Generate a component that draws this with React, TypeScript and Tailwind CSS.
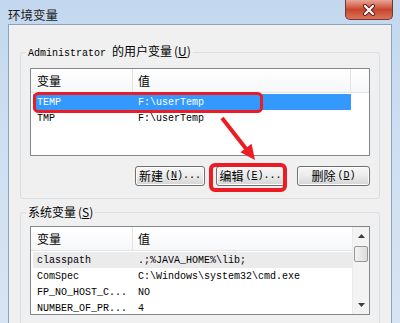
const mono = "font-['Liberation_Mono','Noto_Sans_CJK_SC',monospace]";
const cjk = "font-['Noto_Sans_CJK_SC','Liberation_Sans',sans-serif]";

function Btn({ label, k, w, dots = true }: { label: string; k: string; w: string; dots?: boolean }) {
  return (
    <button
      className={`${w} h-[20px] rounded-[3px] border border-[#707070] bg-gradient-to-b from-[#f7f7f7] via-[#ebebeb] to-[#d4d4d4] flex items-center justify-center text-black shadow-[inset_0_0_0_1px_#fcfcfc]`}
    >
      <span className={`${cjk} text-[12px] leading-none`}>{label}</span>
      <span className={`${mono} ml-[2px] text-[10px] leading-none`}>
        (<span className="underline">{k}</span>){dots ? "..." : ""}
      </span>
    </button>
  );
}

function Header() {
  return (
    <div className={`h-[24px] flex border-b border-[#e3e3e3] bg-gradient-to-b from-white to-[#f6f7f9] ${cjk} text-[12px] text-black`}>
      <div className="w-[102px] pl-[6px] flex items-center border-r border-[#e3e3e3]">变量</div>
      <div className="flex-1 pl-[5px] flex items-center">值</div>
    </div>
  );
}

function Row({ a, b, cls }: { a: string; b: string; cls?: string }) {
  return (
    <div className={`ml-[2px] h-[16px] flex items-center ${mono} text-[10px] ${cls ?? "text-black"}`}>
      <span className="w-[100px] pl-[4px] whitespace-pre">{a}</span>
      <span className="pl-[5px] whitespace-pre">{b}</span>
    </div>
  );
}

function Marks() {
  return (
    <svg className="absolute inset-0 pointer-events-none" width="400" height="323" viewBox="0 0 400 323">
      <rect x="34.5" y="93.5" width="227" height="18" rx="4" fill="none" stroke="#ec1c24" strokeWidth="3" />
      <rect x="211" y="165" width="74" height="25" rx="4" fill="none" stroke="#ec1c24" strokeWidth="4" />
      <line x1="222" y1="118" x2="247" y2="150" stroke="#ec1c24" strokeWidth="4" />
      <polygon points="255,160 240.4,152.2 251.6,143.8" fill="#ec1c24" />
    </svg>
  );
}

export default function App() {
  return (
    <div className="relative w-[400px] h-[323px] overflow-hidden flex flex-col bg-gradient-to-b from-[#c3d8ee] via-[#cfe0f2] to-[#d6e5f4]">
      <div className="h-[30px] flex items-start justify-between">
        <span className={`pl-[8px] pt-[6px] ${cjk} text-[12.5px] leading-[18px] text-[#1a1a1a]`}>环境变量</span>
        <div className="mr-[7px] w-[48px] h-[20px] rounded-b-[5px] border border-t-0 border-[#6b3a35] bg-gradient-to-b from-[#e9a596] via-[#c7462e] to-[#dc7258] flex items-center justify-center">
          <svg width="14" height="12" viewBox="0 0 14 12">
            <path d="M3 2 L11 10 M11 2 L3 10" stroke="#5a1d14" strokeWidth="4" strokeLinecap="round" />
            <path d="M3 2 L11 10 M11 2 L3 10" stroke="#ffffff" strokeWidth="2.2" strokeLinecap="round" />
          </svg>
        </div>
      </div>

      <div className="mx-[8px] flex-1 bg-[#f0f0f0] border border-b-0 border-[#8fa3bb] px-[11px]">
        <fieldset className="mt-[17px] min-w-0 border border-[#d5dfe5] rounded-[3px] px-[9px] pb-[12px]">
          <legend className="ml-[-4px] px-[2px] leading-[16px] text-black">
            <span className={`${mono} text-[10px]`}>Administrator </span>
            <span className={`${cjk} text-[12px]`}>
              的用户变量<span className="ml-[2px]">(<span className="underline">U</span>)</span>
            </span>
          </legend>
          <div className="pt-[6px]">
            <div className="h-[88px] border border-[#828790] bg-white">
              <div className={`h-[24px] flex border-b border-[#e3e3e3] bg-gradient-to-b from-white to-[#f6f7f9] ${cjk} text-[12px] text-black`}>
                <div className="w-[102px] pl-[6px] flex items-center border-r border-[#e3e3e3]">变量</div>
                <div className="w-[218px] pl-[5px] flex items-center border-r border-[#e3e3e3]">值</div>
                <div className="flex-1" />
              </div>
              <div className="pt-[1px]">
                <Row a="TEMP" b={"F:\\userTemp"} cls="w-[318px] bg-[#3399ff] text-white" />
                <Row a="TMP" b={"F:\\userTemp"} />
              </div>
            </div>
            <div className="mt-[10px] flex justify-end">
              <Btn label="新建" k="N" w="w-[70px]" />
              <div className="w-[11px]" />
              <Btn label="编辑" k="E" w="w-[69px]" />
              <div className="w-[12px]" />
              <Btn label="删除" k="D" w="w-[73px]" dots={false} />
            </div>
          </div>
        </fieldset>

        <fieldset className="mt-[5px] min-w-0 border border-[#d5dfe5] rounded-[3px] px-[9px] pb-[11px]">
          <legend className={`ml-[-4px] px-[2px] leading-[16px] text-black ${cjk} text-[12px]`}>
            系统变量<span className="ml-[2px]">(<span className="underline">S</span>)</span>
          </legend>
          <div className="pt-[6px]">
            <div className="h-[89px] border border-[#828790] bg-white flex">
              <div className="flex-1 min-w-0">
                <Header />
                <div className="pt-[1px]">
                  <Row a="classpath" b={".;%JAVA_HOME%\\lib;"} cls="w-[319px] bg-[#ebebeb] text-black" />
                  <Row a="ComSpec" b={"C:\\Windows\\system32\\cmd.exe"} />
                  <Row a="FP_NO_HOST_C..." b="NO" />
                  <Row a="NUMBER_OF_PR..." b="4" />
                </div>
              </div>
              <div className="w-[17px] flex flex-col bg-[#f3f3f3] border-l border-[#eaeaea]">
                <div className="h-[18px] flex items-center justify-center">
                  <svg width="7" height="4" viewBox="0 0 7 4">
                    <polygon points="3.5,0 7,4 0,4" fill="#3d3d3d" />
                  </svg>
                </div>
                <div className="mx-[1px] mt-[1px] h-[16px] rounded-[2px] border border-[#979797] bg-gradient-to-r from-[#f3f3f3] to-[#dcdcdc]" />
                <div className="flex-1" />
                <div className="h-[18px] flex items-center justify-center">
                  <svg width="7" height="4" viewBox="0 0 7 4">
                    <polygon points="0,0 7,0 3.5,4" fill="#3d3d3d" />
                  </svg>
                </div>
              </div>
            </div>
          </div>
        </fieldset>
      </div>

      <Marks />
    </div>
  );
}
